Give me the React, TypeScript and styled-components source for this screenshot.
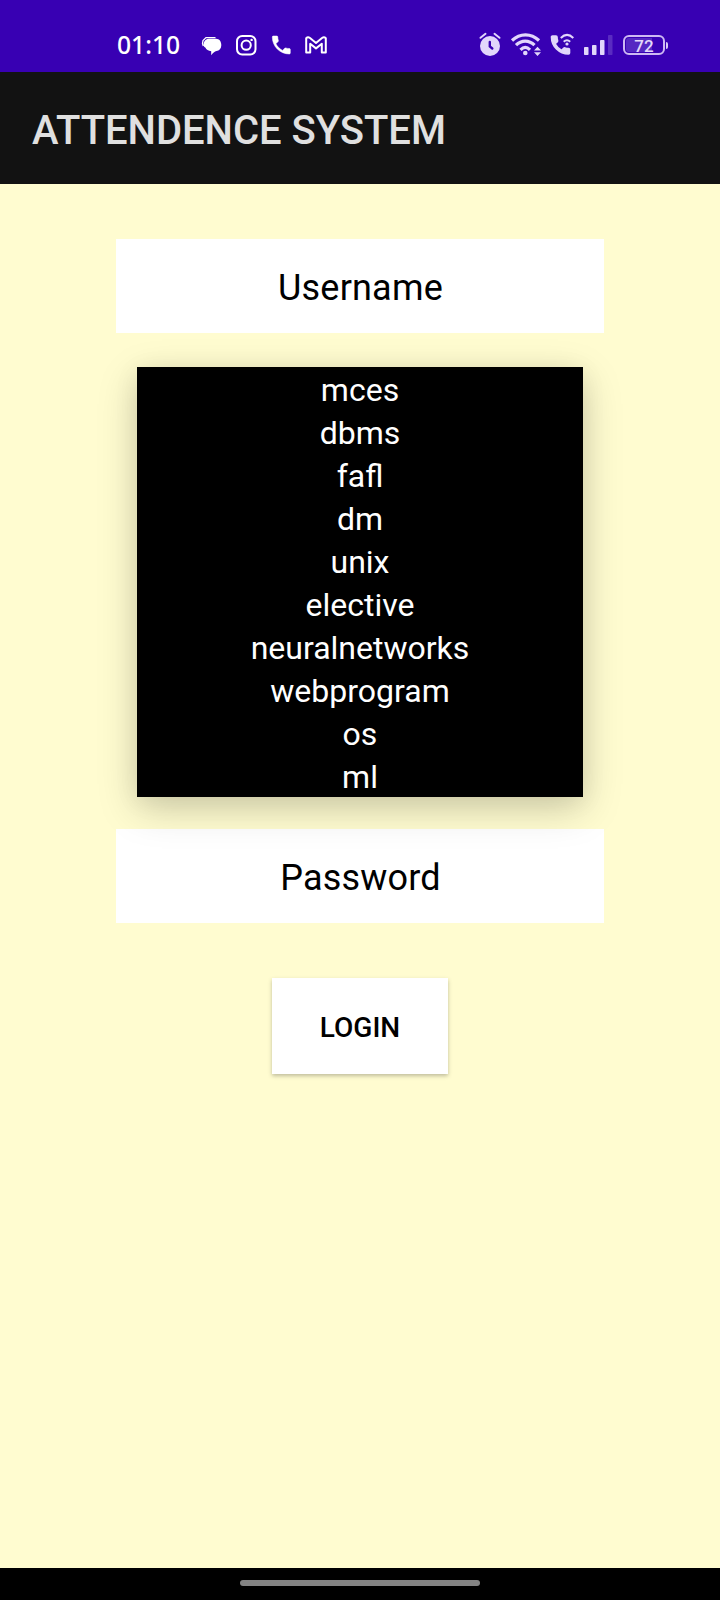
import React from "react";
import styled, { createGlobalStyle } from "styled-components";

const GlobalStyle = createGlobalStyle`
  * { box-sizing: border-box; }
  body { margin: 0; background: #fffcd0; font-family: Roboto, "Liberation Sans", sans-serif; }
`;

const Screen = styled.div`
  display: flex;
  flex-direction: column;
  width: 720px;
  height: 1600px;
  background: #fffcd0;
`;

const StatusBar = styled.header`
  display: flex;
  justify-content: space-between;
  height: 72px;
  padding: 30px 52px 12px 116px;
  background: #3800b3;
`;

const StatusGroup = styled.div`
  display: flex;
  align-items: center;
  height: 30px;
`;

const Clock = styled.time`
  width: 80px;
  padding-left: 1px;
  color: #fff;
  font: 500 24.7px/30px "Noto Sans", sans-serif;
  height: 30px;
  white-space: nowrap;
`;

const Glyph = styled.svg<{ $w: number; $tint?: string }>`
  display: block;
  flex: none;
  width: ${(p) => p.$w}px;
  height: 30px;
  color: ${(p) => p.$tint ?? "#fff"};
`;

const Battery = styled.div`
  display: flex;
  align-items: center;
  gap: 1px;
  &::after {
    content: "";
    width: 2px;
    height: 7px;
    border-radius: 0 2px 2px 0;
    background: #d9c9f7;
  }
`;

const BatteryBody = styled.div`
  width: 42px;
  height: 20px;
  border: 2px solid #cdb8f3;
  border-radius: 6px;
  background: linear-gradient(90deg, #5528c2 0 70%, #3800b3 70%);
  background-clip: content-box;
  padding: 1px;
  color: #e4d8fa;
  font: 500 17px/16px Roboto, sans-serif;
  text-align: center;
`;

const AppBar = styled.div`
  display: flex;
  align-items: center;
  height: 112px;
  padding: 6px 32px 0;
  background: #121212;
`;

const Title = styled.h1`
  margin: 0;
  color: #e0e0e0;
  font-size: 40px;
  font-weight: 500;
  line-height: 48px;
  letter-spacing: -0.03px;
  white-space: nowrap;
`;

const Form = styled.main`
  display: flex;
  flex: 1;
  flex-direction: column;
  align-items: center;
  padding-top: 55px;
`;

const Field = styled.div`
  display: flex;
  align-items: center;
  justify-content: center;
  width: 488px;
  height: 94px;
  padding: 3px 0 0 1px;
  background: #fff;
  color: #000;
  font-size: 36px;
  line-height: 42px;
  letter-spacing: 0.2px;
`;

const SubjectList = styled.ul`
  position: relative;
  z-index: 1;
  width: 446px;
  margin: 34px 0 32px;
  padding: 0;
  background: #000;
  box-shadow: 0 12px 38px rgba(0, 0, 0, 0.18), 0 4px 24px rgba(0, 0, 0, 0.07);
  list-style: none;
`;

const Subject = styled.li`
  height: 43px;
  color: #fff;
  font-size: 32px;
  line-height: 47px;
  text-align: center;
`;

const LoginButton = styled.button`
  width: 176px;
  height: 96px;
  margin-top: 55px;
  padding: 4px 0 0;
  border: 0;
  background: #fff;
  box-shadow: 0 2px 4px rgba(0, 0, 0, 0.25);
  color: #000;
  font: 500 28px/32px Roboto, sans-serif;
`;

const NavigationBar = styled.footer`
  display: flex;
  justify-content: center;
  height: 32px;
  padding-top: 12px;
  background: #000;
`;

const HomeHandle = styled.div`
  width: 240px;
  height: 6px;
  border-radius: 3px;
  background: #838383;
`;

const SUBJECTS = ["mces", "dbms", "fafl", "dm", "unix", "elective", "neuralnetworks", "webprogram", "os", "ml"];
const TINT = "#e2d6fb";
const HANDSET =
  "M6.62 10.79c1.44 2.83 3.76 5.14 6.59 6.59l2.2-2.2c.27-.27.67-.36 1.02-.24 1.12.37 2.33.57 3.57.57.55 0 1 .45 1 1V20c0 .55-.45 1-1 1-9.39 0-17-7.61-17-17 0-.55.45-1 1-1h3.5c.55 0 1 .45 1 1 0 1.25.2 2.45.57 3.57.11.35.03.74-.25 1.02l-2.2 2.2z";

/* Each status glyph is drawn in bar coordinates, cropped to its own slot. */
const NotificationIcons = () => (
  <>
    <Glyph $w={34} viewBox="196 30 34 30">
      <path fill="currentColor" d="M209 38.8h7c3.400 0 5.300 2.800 5.300 6.400 0 3.400-2 5.300-4.800 5.800-1.800.4-3.800 2-5.300 4.200v-4c-2.700-.4-5.200-1.700-5.700-3.500-2.200-1-2.500-3.200-1.500-5.500.8-2 2.600-3.400 5-3.400z" />
      <path fill="none" stroke="currentColor" strokeWidth="1.300" d="M203.300 46l-.8-2.500.5-3 3-2.900h9.500" />
    </Glyph>
    <Glyph $w={34} viewBox="230 30 34 30" fill="none" stroke="currentColor" strokeWidth="2">
      <rect x="237" y="36" width="18.5" height="18.5" rx="5.2" />
      <circle cx="246.2" cy="45.2" r="4.6" />
      <circle cx="251.6" cy="39.9" r="1.2" fill="currentColor" stroke="none" />
    </Glyph>
    <Glyph $w={34} viewBox="264 30 34 30">
      <path fill="currentColor" stroke="currentColor" strokeWidth=".5" transform="translate(269.300 33)" d={HANDSET} />
    </Glyph>
    <Glyph $w={34} viewBox="298 30 34 30" fill="none" stroke="currentColor" strokeWidth="2" strokeLinejoin="round">
      <path d="M306.200 38.200c1-1 2.600-1 3.800-.2l6 5 6-5c1.200-.8 2.800-.8 3.800.2v14.300h-4v-8.700l-5.800 4.600-5.800-4.600v8.700h-4z" />
    </Glyph>
  </>
);

const SystemIcons = () => (
  <>
    <Glyph $w={32} $tint={TINT} viewBox="476 30 32 30">
      <circle cx="490" cy="46" r="10" fill="currentColor" />
      <path d="M480.500 37.800l5-4M499.500 37.800l-5-4" stroke="currentColor" strokeWidth="2" strokeLinecap="round" />
      <path d="M489.800 42v4.500l2.500 2" fill="none" stroke="#3800b3" strokeWidth="2.400" strokeLinecap="round" />
    </Glyph>
    <Glyph $w={38} $tint={TINT} viewBox="508 30 38 30" fill="none" stroke="currentColor" strokeWidth="3.200">
      <path d="M512 40.500c8-7.500 19-7.500 27 0M516 45.200c5.500-5.500 13-5.500 18.500 0M520.500 49.800c3-3 6.500-3 9.500 0" />
      <circle cx="525.300" cy="53" r="2.300" fill="currentColor" stroke="none" />
      <path d="M534 50.500l3.500-3.800 3.500 3.800zM534 52.300h7l-3.500 3.800z" fill="currentColor" stroke="none" />
    </Glyph>
    <Glyph $w={36} $tint={TINT} viewBox="546 30 36 30">
      <path fill="currentColor" stroke="currentColor" strokeWidth="1.600" strokeLinejoin="round" transform="translate(548.500 33)" d={HANDSET} />
      <path d="M560.800 38c4-4 8.500-4 12.500 0M563.700 41.800c2.200-2 4.300-2 6.500 0" fill="none" stroke="currentColor" strokeWidth="2" />
      <circle cx="567" cy="44" r="1.600" fill="currentColor" />
    </Glyph>
    <Glyph $w={41} $tint={TINT} viewBox="582 30 41 30" fill="currentColor">
      <rect x="584" y="47" width="4.500" height="8" rx=".8" />
      <rect x="592" y="45" width="4.500" height="10" rx=".8" />
      <rect x="600" y="40" width="4.500" height="15" rx=".8" />
      <rect x="608" y="35" width="4.500" height="20" rx=".8" opacity=".2" />
    </Glyph>
  </>
);

export default function App() {
  return (
    <>
      <GlobalStyle />
      <Screen>
        <StatusBar>
          <StatusGroup>
            <Clock>01:10</Clock>
            <NotificationIcons />
          </StatusGroup>
          <StatusGroup>
            <SystemIcons />
            <Battery>
              <BatteryBody>72</BatteryBody>
            </Battery>
          </StatusGroup>
        </StatusBar>
        <AppBar>
          <Title>ATTENDENCE SYSTEM</Title>
        </AppBar>
        <Form>
          <Field>Username</Field>
          <SubjectList>
            {SUBJECTS.map((name) => (
              <Subject key={name}>{name}</Subject>
            ))}
          </SubjectList>
          <Field>Password</Field>
          <LoginButton type="button">LOGIN</LoginButton>
        </Form>
        <NavigationBar>
          <HomeHandle />
        </NavigationBar>
      </Screen>
    </>
  );
}
